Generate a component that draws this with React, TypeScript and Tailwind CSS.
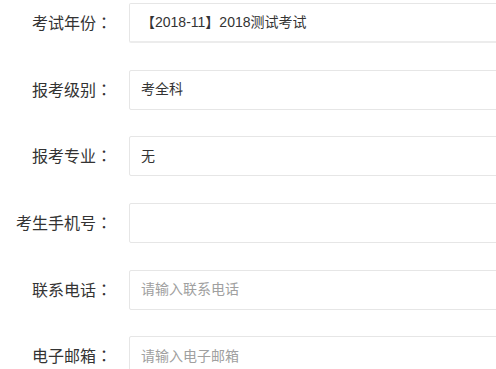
import React from 'react';

const rows: { label: string; value?: string; placeholder?: string }[] = [
  { label: '考试年份', value: '【2018-11】2018测试考试' },
  { label: '报考级别', value: '考全科' },
  { label: '报考专业', value: '无' },
  { label: '考生手机号', value: '' },
  { label: '联系电话', placeholder: '请输入联系电话' },
  { label: '电子邮箱', placeholder: '请输入电子邮箱' },
];

export default function App() {
  return (
    <div
      className="w-[496px] h-[369px] overflow-hidden bg-white pt-[3px]"
      style={{ fontFamily: '"Liberation Sans", "Noto Sans CJK SC", sans-serif' }}
    >
      <div className="flex flex-col gap-[26.7px]">
        {rows.map((row, i) => (
          <div key={i} className="flex items-center">
            <label className="w-[112px] shrink-0 text-right text-[16px] text-[#333]">
              {row.label}
              <span style={{ fontFamily: '"Noto Sans CJK TC", sans-serif' }}>：</span>
            </label>
            <div
              className={`ml-[17px] w-[420px] shrink-0 h-10 flex items-center pl-[11px] rounded-[2px] border border-[#e6e6e6] bg-white text-[14px] ${
                i === 0 ? 'border-b-2 border-b-[#ececec]' : ''
              }`}
            >
              {row.placeholder ? (
                <span className="text-[#a0a0a0]">{row.placeholder}</span>
              ) : (
                <span className="text-[#333]">{row.value}</span>
              )}
            </div>
          </div>
        ))}
      </div>
    </div>
  );
}
